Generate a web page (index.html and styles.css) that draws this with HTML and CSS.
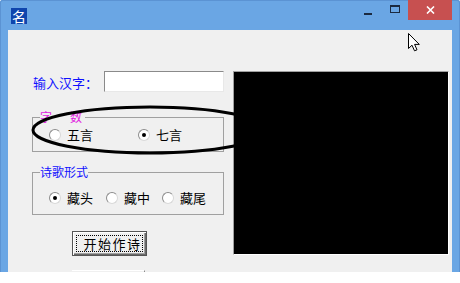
FILE: index.html
```html
<!DOCTYPE html>
<html>
<head>
<meta charset="utf-8">
<link rel="stylesheet" href="styles.css">
</head>
<body>
<div class="window">
  <div class="titlebar">
    <div class="app-icon">名</div>
    <div class="spacer"></div>
    <div class="tb-btn tb-min"><span class="min-glyph"></span></div>
    <div class="tb-btn tb-max"><span class="max-glyph"></span></div>
    <div class="tb-btn tb-close">
      <svg width="9" height="8" viewBox="0 0 9 8"><path d="M1 0.5 L8 7.5 M8 0.5 L1 7.5" stroke="#fff" stroke-width="1.6" fill="none"/></svg>
    </div>
  </div>
  <div class="client">
    <div class="left">
      <div class="row-input">
        <span class="lbl">输入汉字：</span>
        <span class="textbox"></span>
      </div>
      <fieldset class="group group-num">
        <legend class="legend legend-num">字　数</legend>
        <div class="opts opts-num">
          <span class="opt"><span class="radio"></span><span>五言</span></span>
          <span class="opt"><span class="radio checked"></span><span>七言</span></span>
        </div>
      </fieldset>
      <fieldset class="group group-form">
        <legend class="legend legend-form">诗歌形式</legend>
        <div class="opts opts-form">
          <span class="opt"><span class="radio checked focus"></span><span>藏头</span></span>
          <span class="opt"><span class="radio"></span><span>藏中</span></span>
          <span class="opt"><span class="radio"></span><span>藏尾</span></span>
        </div>
      </fieldset>
      <div class="btn btn-default"><span class="focus-rect">开始作诗</span></div>
      <div class="btn btn-second"></div>
    </div>
    <div class="canvas"></div>
    <svg class="ellipse" width="444" height="242" viewBox="0 0 444 242"><ellipse cx="142" cy="100" rx="117" ry="23" fill="none" stroke="#000" stroke-width="3"/></svg>
  </div>
  <svg class="cursor" width="14" height="19" viewBox="0 0 14 19"><path d="M0.5 0.5 L0.5 15.5 L4 12.2 L6.5 17.8 L9 16.8 L6.6 11.4 L11.3 11.4 Z" fill="#fff" stroke="#000" stroke-width="1" stroke-linejoin="miter"/></svg>
</div>
</body>
</html>
```

FILE: styles.css
```css
html, body {
  margin: 0;
  padding: 0;
  background: #ffffff;
}
body {
  width: 460px;
  height: 283px;
  overflow: hidden;
  font-family: "Noto Sans CJK SC", "Noto Sans", sans-serif;
}
.window {
  position: relative;
  width: 460px;
  height: 272px;
  background: #6aa6e4;
  border-radius: 3px 3px 0 0;
  box-shadow: inset 0 1px 0 #5b93d3, inset 1px 0 0 #5b93d3, inset -1px 0 0 #5b93d3;
  display: flex;
  flex-direction: column;
}
.titlebar {
  height: 30px;
  display: flex;
  align-items: flex-start;
}
.app-icon {
  margin: 8px 0 0 11px;
  width: 16px;
  height: 16px;
  background: #0f45ad;
  color: #fff;
  font-size: 14px;
  line-height: 16px;
  text-align: center;
}
.spacer { flex: 1; }
.tb-btn {
  height: 20px;
  display: flex;
  align-items: center;
  justify-content: center;
}
.tb-min { width: 26px; }
.tb-max { width: 27px; }
.tb-close {
  width: 44px;
  margin-right: 8px;
  background: #c75050;
}
.min-glyph {
  width: 8px;
  height: 2px;
  background: #1b2a40;
  margin-top: 7px;
}
.max-glyph {
  width: 8px;
  height: 5px;
  border: 1px solid #1b2a40;
  border-top-width: 2px;
  margin-top: -2px;
}
.client {
  position: relative;
  margin: 0 8px;
  height: 242px;
  background: #f0f0f0;
  display: flex;
  align-items: flex-start;
  padding: 41px 3px 0 24px;
  box-sizing: border-box;
  overflow: hidden;
}
.left {
  width: 192px;
  display: flex;
  flex-direction: column;
  align-items: flex-start;
}
.row-input {
  height: 21px;
  width: 192px;
  display: flex;
  align-items: center;
}
.lbl {
  color: #1010ff;
  font-size: 13px;
  margin-left: 1px;
  width: 71px;
  margin-top: 2px;
}
.textbox {
  width: 120px;
  height: 21px;
  box-sizing: border-box;
  background: #fff;
  border: 1px solid;
  border-color: #8a8a8a #e8e8e8 #e8e8e8 #8a8a8a;
}
.group {
  margin: 0;
  width: 192px;
  box-sizing: border-box;
  border: 1px solid #a0a0a0;
  padding-left: 0;
  padding-right: 0;
  min-width: 0;
}
.group-num {
  margin-top: 19px;
  padding-top: 4px;
  padding-bottom: 8px;
}
.group-form {
  margin-top: 14px;
  padding-top: 12px;
  padding-bottom: 8px;
}
.legend {
  padding: 0;
  margin-left: 7px;
  font-size: 12px;
  line-height: 12px;
  height: 12px;
}
.legend-num {
  color: #e020e0;
  letter-spacing: 3px;
}
.legend-form {
  color: #1010ff;
}
.opts {
  height: 16px;
  display: grid;
  align-items: center;
  padding-left: 16px;
  font-size: 13px;
  color: #000;
}
.opts-num { grid-template-columns: 89px auto; }
.opts-form { grid-template-columns: 57px 56px auto; }
.opt {
  display: flex;
  align-items: center;
  gap: 6px;
  line-height: 16px;
}
.radio {
  width: 12px;
  height: 12px;
  box-sizing: border-box;
  border-radius: 50%;
  background: #fff;
  border: 1px solid;
  border-color: #8c8c8c #d8d8d8 #d8d8d8 #8c8c8c;
  display: flex;
  align-items: center;
  justify-content: center;
}
.radio.checked::after {
  content: "";
  width: 4px;
  height: 4px;
  border-radius: 50%;
  background: #000;
}
.btn {
  margin-left: 40px;
  width: 75px;
  height: 25px;
  box-sizing: border-box;
  background: #f0f0f0;
}
.btn-default {
  margin-top: 16px;
  border: 1px solid #555;
  box-shadow: inset 1px 1px 0 #fff, inset -1px -1px 0 #6a6a6a, inset -2px -2px 0 #a0a0a0;
  padding: 3px;
  display: flex;
}
.focus-rect {
  flex: 1;
  border: 1px dotted #000;
  font-size: 13px;
  line-height: 15px;
  letter-spacing: 1.5px;
  text-align: center;
  color: #000;
  padding-left: 6px;
}
.btn-second {
  margin-top: 14px;
  width: 73px;
  border-top: 1px solid #fff;
  border-right: 1px solid #8a8a8a;
}
.canvas {
  margin-left: 9px;
  width: 216px;
  height: 184px;
  box-sizing: border-box;
  background: #000;
  border: 1px solid;
  border-color: #a0a0a0 #fff #fff #a0a0a0;
}
.ellipse {
  position: absolute;
  left: 0;
  top: 0;
  pointer-events: none;
}
.cursor {
  position: absolute;
  left: 408px;
  top: 33px;
}
```
